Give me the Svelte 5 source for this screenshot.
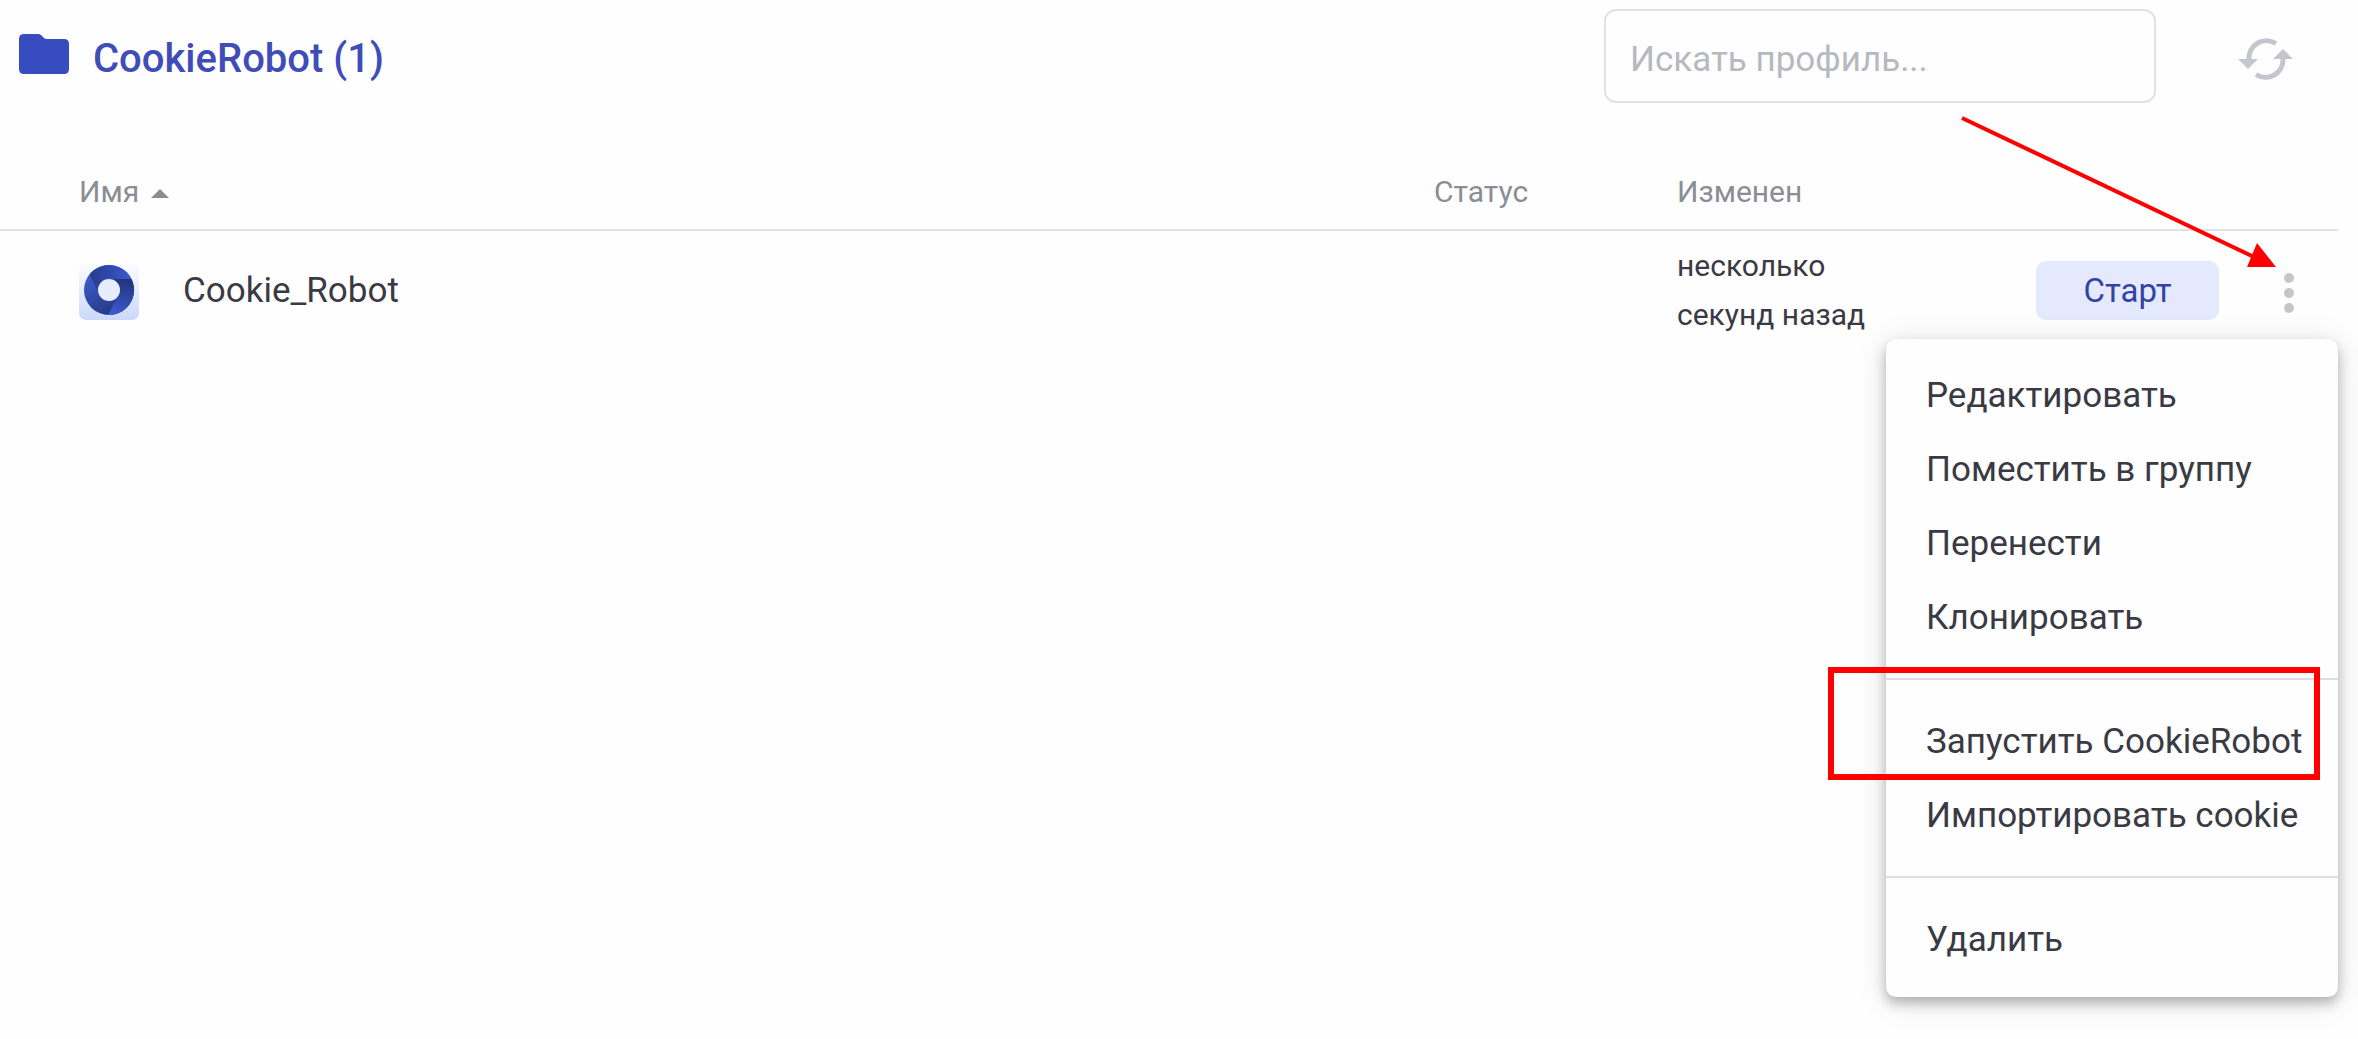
<script lang="ts">
	interface Profile {
		name: string
		status: string
		changed: string
	}

	const folder = 'CookieRobot'

	const profiles: Profile[] = [
		{ name: 'Cookie_Robot', status: '', changed: 'несколько секунд назад' }
	]

	// Each inner list is separated by a divider
	const menuGroups: string[][] = [
		['Редактировать', 'Поместить в группу', 'Перенести', 'Клонировать'],
		['Запустить CookieRobot', 'Импортировать cookie'],
		['Удалить']
	]

	let search = $state('')
	let openMenu = $state<string | null>('Cookie_Robot')

	const visible = $derived(
		profiles.filter((p) => p.name.toLowerCase().includes(search.toLowerCase()))
	)

	function toggleMenu(name: string) {
		openMenu = openMenu === name ? null : name
	}
</script>

<main class="page">
	<header class="toolbar">
		<svg class="folder" viewBox="0 0 50 40" aria-hidden="true">
			<path
				d="M5 0H19Q21 0 22 1L25 4Q26 5 28 5H45Q50 5 50 10V35Q50 40 45 40H5Q0 40 0 35V5Q0 0 5 0Z"
			/>
		</svg>
		<h1 class="title">{folder} ({profiles.length})</h1>

		<input
			class="search"
			type="text"
			placeholder="Искать профиль..."
			aria-label="Искать профиль"
			bind:value={search}
		/>

		<button type="button" class="refresh" aria-label="Обновить">
			<svg viewBox="0 0 56 42" aria-hidden="true">
				<path class="arc" d="M38 5.5A17.5 17.5 0 0 0 11 21" />
				<path class="arc" d="M18 36.5A17.5 17.5 0 0 0 45 21" />
				<path class="tip" d="M0 21H20L10 31Z" />
				<path class="tip" d="M35 21H55L45 11Z" />
			</svg>
		</button>
	</header>

	<table class="profiles">
		<thead>
			<tr>
				<th class="col-name" aria-sort="ascending">
					<span class="sort">
						Имя
						<svg viewBox="0 0 18 9" aria-hidden="true"><path d="M0 9L9 0L18 9Z" /></svg>
					</span>
				</th>
				<th class="col-status">Статус</th>
				<th class="col-changed">Изменен</th>
				<th class="col-actions"></th>
			</tr>
		</thead>
		<tbody>
			{#each visible as profile (profile.name)}
				<tr>
					<td class="col-name">
						<div class="name">
							<svg class="logo" viewBox="0 0 60 60" aria-hidden="true">
								<defs>
									<linearGradient id="tile" x1="0" y1="0" x2="0" y2="1">
										<stop offset="0" stop-color="#ffffff" />
										<stop offset="1" stop-color="#cbd8fb" />
									</linearGradient>
									<linearGradient id="top" x1="0" y1="0" x2="1" y2="0">
										<stop offset="0" stop-color="#273c8c" />
										<stop offset="1" stop-color="#3c59d0" />
									</linearGradient>
									<linearGradient id="right" x1="0.5" y1="0" x2="0.3" y2="1">
										<stop offset="0" stop-color="#22357e" />
										<stop offset="1" stop-color="#3d5ad2" />
									</linearGradient>
									<linearGradient id="left" x1="0" y1="0" x2="0.6" y2="1">
										<stop offset="0" stop-color="#4464e0" />
										<stop offset="1" stop-color="#23367f" />
									</linearGradient>
								</defs>
								<rect width="60" height="60" rx="7" fill="url(#tile)" />
								<circle cx="30" cy="30" r="25" fill="url(#left)" />
								<path d="M10.5 14.5A25 25 0 0 1 52.5 19H30L19 31Z" fill="url(#top)" />
								<path d="M30 19H52.5A25 25 0 0 1 29 55L41 32Z" fill="url(#right)" />
								<circle cx="30" cy="30" r="11" fill="#e6edfe" />
							</svg>
							{profile.name}
						</div>
					</td>
					<td class="col-status">{profile.status}</td>
					<td class="col-changed">{profile.changed}</td>
					<td class="col-actions">
						<div class="actions">
							<button type="button" class="start">Старт</button>
							<button
								type="button"
								class="more"
								aria-label="Действия"
								aria-expanded={openMenu === profile.name}
								onclick={() => toggleMenu(profile.name)}
							>
								<svg viewBox="0 0 10 40" aria-hidden="true">
									<circle cx="5" cy="5" r="5" />
									<circle cx="5" cy="20" r="5" />
									<circle cx="5" cy="35" r="5" />
								</svg>
							</button>
						</div>

						{#if openMenu === profile.name}
							<div class="menu" role="menu">
								{#each menuGroups as group}
									<div class="group" role="group">
										{#each group as item}
											<button type="button" class="item" role="menuitem">{item}</button>
										{/each}
									</div>
								{/each}
							</div>
						{/if}
					</td>
				</tr>
			{/each}
		</tbody>
	</table>

	<!-- Tutorial hints over the menu -->
	<svg class="hints" viewBox="0 0 540 800" aria-hidden="true">
		<path class="pointer" d="M144 118L436 257" />
		<path class="head" d="M458 267L439 243L429 267Z" />
		<rect class="frame" x="13" y="670" width="486" height="107" />
	</svg>
</main>

<style>
	:global(body) {
		margin: 0;
		background: #fefefe;
	}

	.page {
		position: relative;
		min-height: 100vh;
		padding: 9px 20px 0 0;
		box-sizing: border-box;
		font-family: Roboto, 'Liberation Sans', sans-serif;
		font-size: 35px;
		color: #3a3a44;
	}

	button,
	input {
		font: inherit;
	}

	button {
		padding: 0;
		border: none;
		background: transparent;
		cursor: pointer;
	}

	.toolbar {
		display: flex;
		align-items: center;
		padding-left: 19px;
	}

	.folder {
		width: 50px;
		height: 40px;
		margin: 0 24px 4px 0;
		fill: #374dbf;
	}

	.title {
		flex: 1;
		margin: 0;
		padding-top: 6px;
		font-size: 40px;
		font-weight: 500;
		line-height: 46px;
		color: #3f4db8;
	}

	.search {
		width: 552px;
		height: 94px;
		padding: 6px 24px 0;
		box-sizing: border-box;
		border: 2px solid #e1e1e3;
		border-radius: 12px;
		background: #fefefe;
		color: inherit;
	}

	.search::placeholder {
		color: #b6b9bf;
		opacity: 1;
	}

	.refresh {
		display: flex;
		justify-content: center;
		width: 100px;
		margin: 6px 22px 0 60px;
	}

	.refresh svg {
		width: 56px;
		height: 42px;
	}

	.arc {
		fill: none;
		stroke: #c4c6cd;
		stroke-width: 5;
	}

	.tip {
		fill: #c4c6cd;
	}

	.profiles {
		width: 100%;
		margin-top: 50px;
		border-collapse: separate;
		border-spacing: 0;
		table-layout: fixed;
	}

	th {
		height: 76px;
		padding: 0;
		border-bottom: 2px solid #e2e2e3;
		font-size: 30px;
		font-weight: 400;
		text-align: left;
		color: #8a8e94;
	}

	td {
		height: 118px;
		padding: 0;
	}

	th.col-name,
	td.col-name {
		padding-left: 79px;
	}

	.col-status,
	.col-changed {
		width: 243px;
	}

	.col-actions {
		position: relative;
		width: 418px;
	}

	.sort {
		display: inline-flex;
		align-items: center;
		gap: 12px;
	}

	.sort svg {
		width: 18px;
		height: 9px;
		margin-top: 4px;
		fill: #8a8e94;
	}

	.name {
		display: flex;
		align-items: center;
		gap: 44px;
	}

	.logo {
		width: 60px;
		height: 60px;
	}

	td.col-changed {
		font-size: 30px;
		line-height: 49px;
	}

	.actions {
		display: flex;
		justify-content: flex-end;
		align-items: center;
		gap: 40px;
		padding-right: 19px;
	}

	.start {
		width: 183px;
		height: 59px;
		border-radius: 10px;
		background: #e5e9fd;
		font-size: 33px;
		color: #3243a5;
	}

	.more {
		display: flex;
		justify-content: center;
		width: 60px;
		padding-top: 6px;
	}

	.more svg {
		width: 10px;
		height: 40px;
		fill: #c4c6cd;
	}

	.menu {
		position: absolute;
		top: 108px;
		right: 0;
		z-index: 1;
		width: 452px;
		padding: 19px 0 21px;
		box-sizing: border-box;
		border-radius: 10px;
		background: #fefefe;
		box-shadow:
			0 6px 12px rgba(0, 0, 0, 0.26),
			0 4px 32px rgba(0, 0, 0, 0.12);
	}

	.group + .group {
		margin-top: 24px;
		padding-top: 24px;
		border-top: 2px solid #dedee0;
	}

	.item {
		display: block;
		width: 100%;
		height: 74px;
		padding: 0 40px;
		text-align: left;
		white-space: nowrap;
		color: inherit;
	}

	.item:hover {
		background: #f3f4fb;
	}

	.hints {
		position: absolute;
		top: 0;
		right: 0;
		z-index: 2;
		width: 540px;
		height: 800px;
		pointer-events: none;
	}

	.pointer,
	.frame {
		fill: none;
		stroke: #ff0000;
	}

	.pointer {
		stroke-width: 4;
	}

	.frame {
		stroke-width: 6;
	}

	.head {
		fill: #ff0000;
	}
</style>
